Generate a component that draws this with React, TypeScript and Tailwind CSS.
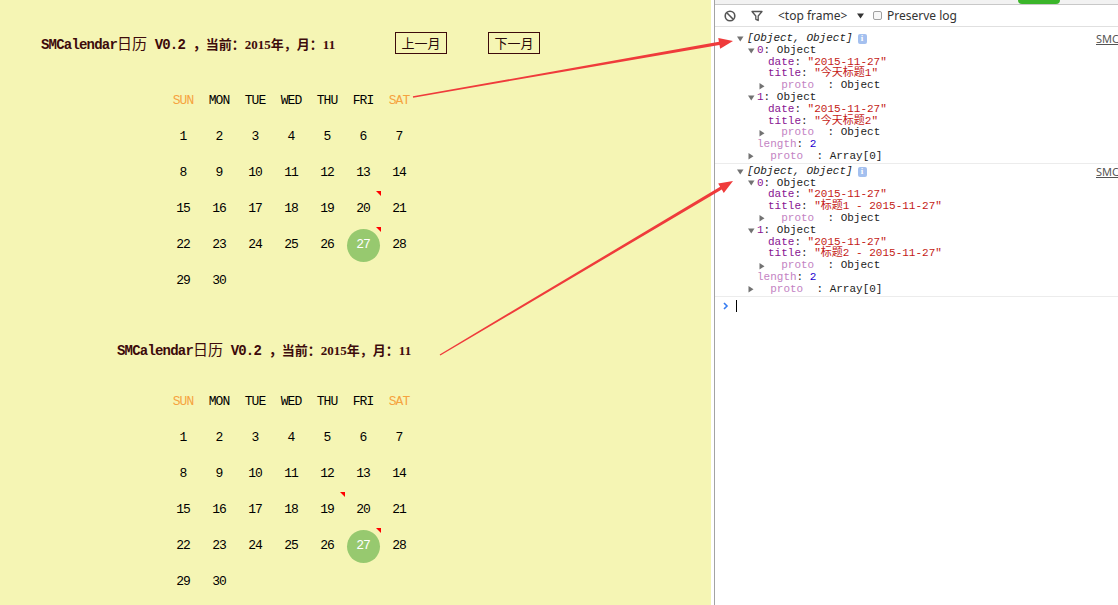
import React from "react";

const weekdays = ["SUN", "MON", "TUE", "WED", "THU", "FRI", "SAT"];
const days = Array.from({ length: 30 }, (_, i) => i + 1);

const Title = () => (
  <span className="whitespace-nowrap text-[#3d0b0b]">
    <span className="font-['Liberation_Mono',monospace] text-[14px] font-bold tracking-[-0.8px]">
      SMCalendar
    </span>
    <span className="font-['Noto_Sans_CJK_SC',sans-serif] text-[15px]">日历</span>
    <span className="font-['Liberation_Mono','Noto_Sans_CJK_SC',monospace] text-[14px] font-bold tracking-[-0.8px]">
      {" V0.2 ，"}
    </span>
    <span className="font-['Liberation_Serif','Noto_Sans_CJK_SC',serif] text-[13px] font-bold">
      当前：2015年，月：11
    </span>
  </span>
);

const Calendar = ({ marks }: { marks: number[] }) => {
  return (
    <div className="ml-[165px] grid grid-cols-[repeat(7,36px)] auto-rows-[36px] font-['Liberation_Mono',monospace] text-[13px] tracking-[-1px]">
      {weekdays.map((w, i) => (
        <div
          key={w}
          className={
            i === 0 || i === 6
              ? "flex items-center justify-center text-[#f5a33f]"
              : "flex items-center justify-center text-black"
          }
        >
          {w}
        </div>
      ))}
      {days.map((d) => (
        <div key={d} className="relative flex items-center justify-center text-black">
          {d === 27 ? (
            <span className="flex h-[33px] w-[33px] items-center justify-center rounded-full bg-[#97c96f] text-white">
              27
            </span>
          ) : (
            d
          )}
          {marks.includes(d) && (
            <span className="absolute right-0 top-0 h-0 w-0 border-l-[5px] border-t-[5px] border-l-transparent border-t-[#f00]" />
          )}
        </div>
      ))}
    </div>
  );
};

const Tri = ({ dir }: { dir: "down" | "right" }) =>
  dir === "down" ? (
    <svg width="7" height="6" viewBox="0 0 7 6" className="ml-[1px]">
      <path d="M0 0.5h6.5L3.25 5.5z" fill="#727272" />
    </svg>
  ) : (
    <svg width="6" height="7" viewBox="0 0 6 7" className="ml-[1px]">
      <path d="M0.5 0v6.5L5.5 3.25z" fill="#727272" />
    </svg>
  );

const indents: Record<number, string> = {
  1: "pl-[32px]",
  2: "pl-[43px]",
};

const Line = ({
  lvl,
  tri,
  children,
}: {
  lvl: number;
  tri?: "down" | "right";
  children: React.ReactNode;
}) => (
  <div className={`flex h-[11.8px] items-center whitespace-nowrap leading-[11.8px] ${indents[lvl]}`}>
    <span className="flex w-[10px] shrink-0 items-center">{tri && <Tri dir={tri} />}</span>
    <span>{children}</span>
  </div>
);

const Key = ({ children }: { children: React.ReactNode }) => (
  <span className="text-[#881391]">{children}</span>
);
const Faint = ({ children }: { children: React.ReactNode }) => (
  <span className="text-[#c383c3]">{children}</span>
);
const Str = ({ children }: { children: React.ReactNode }) => (
  <span className="text-[#c41a16]">{children}</span>
);

const Proto = ({ lvl, type }: { lvl: number; type: string }) => (
  <Line lvl={lvl} tri="right">
    <Faint>{"\u00a0\u00a0proto\u00a0\u00a0"}</Faint>: {type}
  </Line>
);

const Entry = ({ titles }: { titles: string[] }) => (
  <div className="border-b border-[#ececec] pt-[2px]">
    <div className="flex h-[11.8px] items-center whitespace-nowrap leading-[11.8px]">
      <div className="flex w-[381px] shrink-0 items-center pl-[21px]">
        <span className="flex w-[11px] shrink-0 items-center">
          <Tri dir="down" />
        </span>
        <span className="italic">[Object, Object]</span>
        <span className="ml-[5px] flex h-[10px] w-[9px] items-center justify-center rounded-[2px] bg-[#a4c0ef] font-['Liberation_Serif',serif] text-[9px] font-bold text-white">
          i
        </span>
      </div>
      <span className="font-['Noto_Sans',sans-serif] text-[11px] text-[#545454] underline">
        SMC
      </span>
    </div>
    {titles.map((t, i) => (
      <React.Fragment key={i}>
        <Line lvl={1} tri="down">
          <Key>{i}</Key>: Object
        </Line>
        <Line lvl={2}>
          <Key>date</Key>: <Str>"2015-11-27"</Str>
        </Line>
        <Line lvl={2}>
          <Key>title</Key>: <Str>"{t}"</Str>
        </Line>
        <Proto lvl={2} type="Object" />
      </React.Fragment>
    ))}
    <Line lvl={1}>
      <Faint>length</Faint>: <span className="text-[#1c00cf]">2</span>
    </Line>
    <Proto lvl={1} type="Array[0]" />
  </div>
);

const arrow = (x1: number, y1: number, x2: number, y2: number) => {
  const len = Math.hypot(x2 - x1, y2 - y1);
  const dx = (x2 - x1) / len;
  const dy = (y2 - y1) / len;
  const nx = -dy;
  const ny = dx;
  const bx = x2 - dx * 14;
  const by = y2 - dy * 14;
  const p = (x: number, y: number, w: number) => `${x + nx * w},${y + ny * w}`;
  return [
    p(x1, y1, 0.7),
    p(bx, by, 1.6),
    p(bx, by, 5.5),
    `${x2},${y2}`,
    p(bx, by, -5.5),
    p(bx, by, -1.6),
    p(x1, y1, -0.7),
  ].join(" ");
};

export default function App() {
  return (
    <div className="relative flex h-[605px] w-[1118px] overflow-hidden bg-white">
      {/* page */}
      <div className="flex h-[605px] w-[711px] shrink-0 flex-col bg-[#f5f5b4]">
        <div className="ml-[41px] mt-[32px] flex h-[22px] items-center">
          <div className="w-[354px]">
            <Title />
          </div>
          <button className="flex h-[22px] w-[52px] items-center justify-center border border-[#3d0b0b] font-['Noto_Sans_CJK_SC',sans-serif] text-[13px] text-[#2a0a0a]">
            上一月
          </button>
          <button className="ml-[41px] flex h-[22px] w-[52px] items-center justify-center border border-[#3d0b0b] font-['Noto_Sans_CJK_SC',sans-serif] text-[13px] text-[#2a0a0a]">
            下一月
          </button>
        </div>
        <div className="mt-[29px]">
          <Calendar marks={[20, 27]} />
        </div>
        <div className="ml-[117px] mt-[40px] flex h-[20px] items-center">
          <Title />
        </div>
        <div className="mt-[25px]">
          <Calendar marks={[19, 27]} />
        </div>
      </div>

      {/* devtools console */}
      <div className="flex-1 bg-white pl-[3px]">
        <div className="flex h-full flex-col border-l border-[#a3a3a3]">
          <div className="flex h-[5px] border-b border-[#c8c8c8] bg-[#f2f2f2]">
            <div className="ml-[303px] h-[4px] w-[42px] rounded-b-[8px] bg-[#3bb52a]" />
          </div>
          <div className="flex h-[22px] items-center border-b border-[#e0e0e0] pl-[9px] font-['Noto_Sans',sans-serif] text-[12px] text-[#333]">
            <svg width="12" height="12" viewBox="0 0 12 12">
              <circle cx="6" cy="6" r="4.8" fill="none" stroke="#555" strokeWidth="1.6" />
              <path d="M2.8 2.8l6.4 6.4" stroke="#555" strokeWidth="1.6" />
            </svg>
            <svg width="12" height="12" viewBox="0 0 12 12" className="ml-[15px]">
              <path d="M1 1.5h10L7.2 6v4.5L4.8 9.3V6z" fill="none" stroke="#555" strokeWidth="1.3" strokeLinejoin="round" />
            </svg>
            <span className="ml-[15px] w-[79px] shrink-0">&lt;top frame&gt;</span>
            <svg width="7" height="6" viewBox="0 0 7 6">
              <path d="M0 0.5h7L3.5 5.5z" fill="#333" />
            </svg>
            <span className="ml-[9px] h-[9px] w-[9px] rounded-[2px] border border-[#a0a0a0] bg-[#f7f7f7]" />
            <span className="ml-[5px]">Preserve log</span>
          </div>
          <div className="pt-[4px] font-['Liberation_Mono','Noto_Sans_CJK_SC',monospace] text-[11px] text-[#222]">
            <Entry titles={["今天标题1", "今天标题2"]} />
            <Entry titles={["标题1 - 2015-11-27", "标题2 - 2015-11-27"]} />
            <div className="flex h-[18px] items-center pl-[8px]">
              <svg width="6" height="8" viewBox="0 0 6 8">
                <path d="M1 1l3 3-3 3" fill="none" stroke="#367cf1" strokeWidth="1.6" />
              </svg>
              <span className="ml-[7px] h-[12px] w-[1px] bg-black" />
            </div>
          </div>
        </div>
      </div>

      {/* annotation arrows */}
      <svg className="pointer-events-none absolute inset-0" width="1118" height="605">
        <polygon points={arrow(413, 97, 733, 41)} fill="#ef3b3b" />
        <polygon points={arrow(440, 355, 733, 181)} fill="#ef3b3b" />
      </svg>
    </div>
  );
}
